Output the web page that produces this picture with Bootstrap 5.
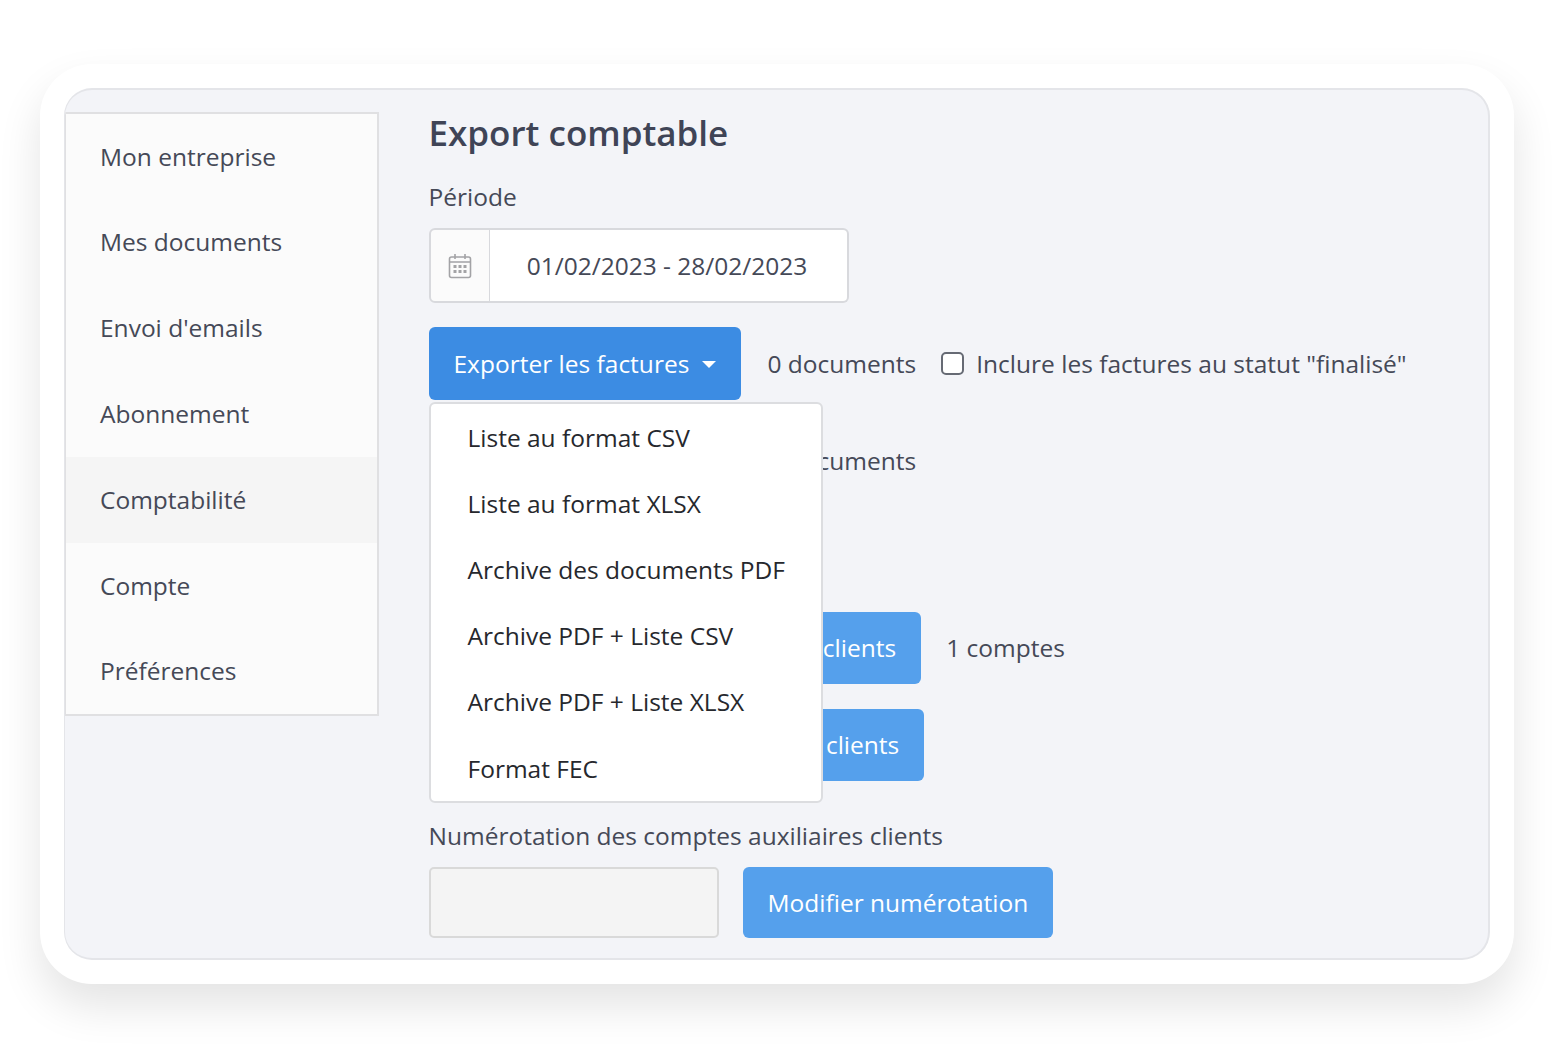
<!DOCTYPE html>
<html lang="fr">
<head>
<meta charset="utf-8">
<title>Export comptable</title>
<link rel="stylesheet" href="https://cdn.jsdelivr.net/npm/bootstrap@5.3.0/dist/css/bootstrap.min.css">
<style>
html,body{height:100%;background:#fff}
body{font-family:"Open Sans","Noto Sans",sans-serif;font-size:24.5px;color:#454957;overflow:hidden}
.shell{margin:64px 40px 0;height:920px;padding:24px 24px 24px 24px;background:#fff;border-radius:52px;box-shadow:0 22px 44px rgba(0,0,0,.11)}
.panel{height:872px;background:#f3f4f8;border:2px solid #e4e5e9;border-left-width:1px;border-radius:28px;padding-top:22px;overflow:hidden}
.side{width:314px;height:604px;background:#fbfbfb;border:2px solid #e0e0e2;border-left-width:1px;border-radius:0;flex:none}
.side .list-group-item{height:85.8px;flex:none;padding:0 0 0 34px;display:flex;align-items:center;background:transparent;border:0;color:#454957;font-size:24.5px}
.side .list-group-item.current{background:#f5f5f5}
.work{margin-left:49.5px}
.ttl{font-size:35px;font-weight:600;line-height:42px;color:#3f4456;margin:0 0 24px}
.lbl{display:block;line-height:37px;font-size:24.5px;margin:0 0 13px;color:#454957}
.range{width:420px;height:75px;margin-bottom:24px;flex-wrap:nowrap}
.range .input-group-text{width:62px;justify-content:center;padding:0;background:#fbfbfb;border:2px solid #d8d9dd;border-radius:6px 0 0 6px}
.range .form-control{border:2px solid #d8d9dd;border-left:0;border-radius:0 6px 6px 0;font-size:24.5px;color:#454957;text-align:center;padding:2px 20px 0 18px;background:#fff;box-shadow:none}
.act{height:73px;line-height:1;font-size:24.5px;padding:2px 25px 0;border:0;border-radius:6px;color:#fff;white-space:nowrap;display:inline-flex;align-items:center}
.act-strong{background:#3c8ce3}
.act-strong:hover,.act-strong:active,.act-strong.show{background:#3c8ce3!important;color:#fff!important}
.act-soft,.act-soft:hover{background:#55a0ec;color:#fff;height:72px;padding-top:0}
.act.dropdown-toggle::after{margin-left:13px;border-top-width:7px;border-right-width:7px;border-left-width:7px;vertical-align:middle}
.ligne{display:flex;align-items:center;gap:27px;margin-bottom:24px;position:relative}
.ligne>span,.check>span{padding-top:2px}
.wide{width:312px}
.gap-big{margin-top:115px;gap:25px;margin-bottom:25px}
.gap-big>span{padding-top:0}
.menu{top:75px;left:0;width:394px;height:401px;padding:1px 0 0;margin:0;border:2px solid #dcdde0;border-radius:6px;z-index:5;display:block}
.menu .dropdown-item{height:66.2px;padding:0 0 0 37px;display:flex;align-items:center;font-size:24.5px;color:#26282d}
.check{display:flex;align-items:center;gap:12px;margin:0 0 0 -2px}
.check .form-check-input{width:23px;height:23px;margin:0;border:2px solid #666a74;border-radius:5px;flex:none;float:none}
.num{margin-top:36px;margin-bottom:13px}
.num-input{width:290px;height:71px;background:#f4f4f4;border:2px solid #d9d9d9;border-radius:5px}
.num-btn{height:71px;padding:2px 25px 0}
</style>
</head>
<body>
<div class="shell">
  <div class="panel d-flex align-items-start">
    <div class="list-group side">
      <a class="list-group-item" href="#">Mon entreprise</a>
      <a class="list-group-item" href="#">Mes documents</a>
      <a class="list-group-item" href="#">Envoi d'emails</a>
      <a class="list-group-item" href="#">Abonnement</a>
      <a class="list-group-item current" href="#">Comptabilité</a>
      <a class="list-group-item" href="#">Compte</a>
      <a class="list-group-item" href="#">Préférences</a>
    </div>
    <div class="work flex-grow-1">
      <h2 class="ttl">Export comptable</h2>
      <label class="lbl">Période</label>
      <div class="input-group range">
        <span class="input-group-text">
          <svg width="24" height="26" viewBox="0 0 24 26" fill="none" stroke="#a3a3a6" stroke-width="1.6">
            <rect x="1.5" y="4" width="21" height="20.5" rx="2"/>
            <path d="M1.5 9h21M7 1v5M17 1v5"/>
            <g fill="#a3a3a6" stroke="none">
              <rect x="5.5" y="12" width="3" height="3"/><rect x="10.5" y="12" width="3" height="3"/><rect x="15.5" y="12" width="3" height="3"/>
              <rect x="5.5" y="17" width="3" height="3"/><rect x="10.5" y="17" width="3" height="3"/><rect x="15.5" y="17" width="3" height="3"/>
            </g>
          </svg>
        </span>
        <input class="form-control" type="text" value="01/02/2023 - 28/02/2023">
      </div>
      <div class="ligne">
        <div class="dropdown position-static">
          <button class="btn act act-strong wide dropdown-toggle show" type="button">Exporter les factures</button>
          <ul class="dropdown-menu menu show">
            <li><a class="dropdown-item" href="#">Liste au format CSV</a></li>
            <li><a class="dropdown-item" href="#">Liste au format XLSX</a></li>
            <li><a class="dropdown-item" href="#">Archive des documents PDF</a></li>
            <li><a class="dropdown-item" href="#">Archive PDF + Liste CSV</a></li>
            <li><a class="dropdown-item" href="#">Archive PDF + Liste XLSX</a></li>
            <li><a class="dropdown-item" href="#">Format FEC</a></li>
          </ul>
        </div>
        <span>0 documents</span>
        <label class="check"><input class="form-check-input" type="checkbox"><span>Inclure les factures au statut "finalisé"</span></label>
      </div>
      <div class="ligne">
        <button class="btn act act-strong wide" type="button">Exporter les avoirs</button>
        <span>0 documents</span>
      </div>
      <div class="ligne gap-big">
        <button class="btn act act-soft" type="button">Exporter les comptes auxiliaires clients</button>
        <span>1 comptes</span>
      </div>
      <div class="ligne mb-0">
        <button class="btn act act-soft" type="button">Importer les comptes auxiliaires clients</button>
      </div>
      <label class="lbl num">Numérotation des comptes auxiliaires clients</label>
      <div class="d-flex gap-4">
        <div class="num-input"></div>
        <button class="btn act act-soft num-btn" type="button">Modifier numérotation</button>
      </div>
    </div>
  </div>
</div>
<script src="https://cdn.jsdelivr.net/npm/bootstrap@5.3.0/dist/js/bootstrap.bundle.min.js"></script>
</body>
</html>
